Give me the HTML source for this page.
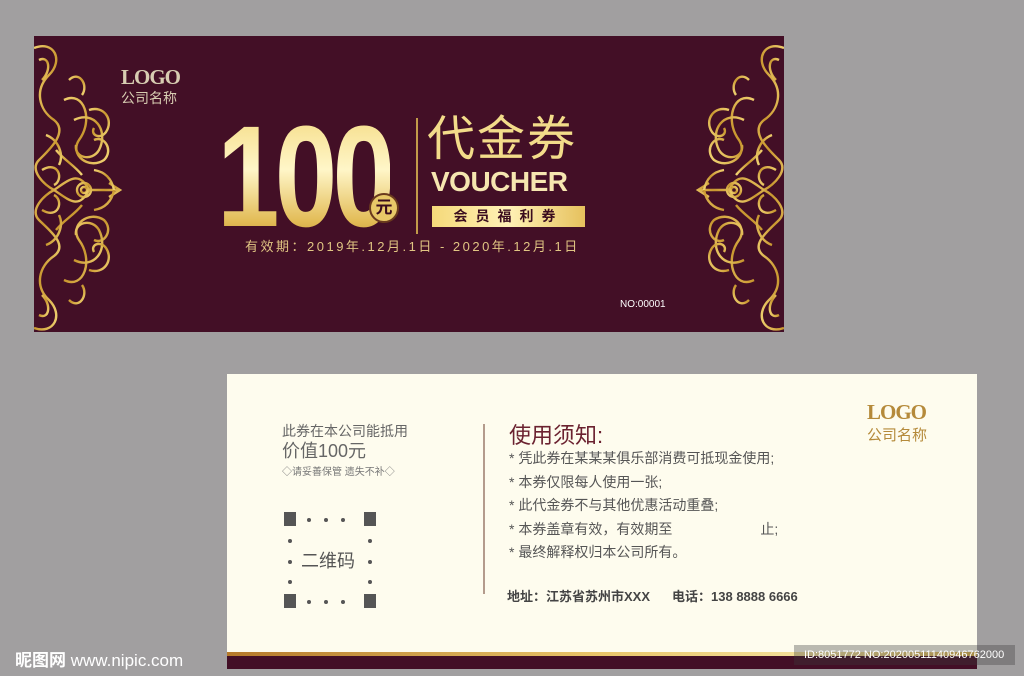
<!DOCTYPE html>
<html><head><meta charset="utf-8"><style>
*{margin:0;padding:0;box-sizing:border-box}
body{width:1024px;height:676px;background:#a19fa0;position:relative;overflow:hidden;font-family:"Liberation Sans","Noto Sans CJK SC",sans-serif}
.a{position:absolute}
.top{left:34px;top:36px;width:750px;height:296px;background:#430f26}
.gold{background:linear-gradient(180deg,#f3d77a 0%,#fff6c8 45%,#e2bb55 80%,#b98a2e 100%);-webkit-background-clip:text;background-clip:text;color:transparent}
.bot{left:227px;top:374px;width:750px;height:295px;background:#fefcee}
.sq{background:#555;width:12px;height:14px}
.dt{background:#555;width:4px;height:4px;border-radius:50%}
</style></head><body>
<div class="a top">
<svg class="a" style="left:0;top:0" width="750" height="296" viewBox="0 0 750 296">
<defs><linearGradient id="g" x1="0" y1="0" x2="1" y2="1"><stop offset="0" stop-color="#f0cf6e"/><stop offset=".5" stop-color="#c9972f"/><stop offset="1" stop-color="#f3d676"/></linearGradient>
<g id="orn" fill="none" stroke="url(#g)" stroke-width="2.4">
<path d="M0 8 C20 0 30 20 15 35 C0 50 5 70 20 80 C35 92 15 110 5 120 C-5 130 10 145 20 150 C10 155 -5 170 5 180 C15 190 35 205 20 216 C5 226 0 246 15 260 C30 275 20 295 0 288"/>
<path d="M5 20 C15 15 18 30 8 40"/><path d="M5 275 C15 280 18 265 8 255"/>
<path d="M20 150 C35 140 45 130 55 150 C45 170 35 160 20 150"/>
<path d="M30 60 C50 50 60 80 45 100 C35 115 55 130 70 120 C80 110 70 95 60 100"/>
<path d="M30 240 C50 250 60 220 45 200 C35 185 55 170 70 180 C80 190 70 205 60 200"/>
<path d="M55 150 L85 150 M75 143 L86 150 L75 157"/>
<path d="M40 80 C60 70 75 90 65 110 C58 122 40 118 42 105"/>
<path d="M40 220 C60 230 75 210 65 190 C58 178 40 182 42 195"/>
<circle cx="50" cy="150" r="7"/><circle cx="50" cy="150" r="3"/>
<path d="M22 110 C30 120 40 125 48 135"/><path d="M22 190 C30 180 40 175 48 165"/>
<path d="M35 40 C45 30 55 45 48 55"/><path d="M35 260 C45 270 55 255 48 245"/>
<path d="M8 130 C25 120 30 140 20 145"/><path d="M8 170 C25 180 30 160 20 155"/>
<path d="M55 70 C70 65 80 80 72 92 C66 100 56 95 60 88"/><path d="M55 230 C70 235 80 220 72 208 C66 200 56 205 60 212"/>
<path d="M12 95 C25 100 30 115 25 125"/><path d="M12 205 C25 200 30 185 25 175"/>
<path d="M60 130 C72 132 78 140 80 150"/><path d="M60 170 C72 168 78 160 80 150"/>
</g></defs>
<use href="#orn" transform="translate(0,4)"/>
<use href="#orn" transform="translate(750,4) scale(-1,1)"/>
</svg>
<div class="a" style="left:87px;top:29px;font-family:'Liberation Serif',serif;font-weight:bold;font-size:21px;color:#d8cdb2;letter-spacing:-1px">LOGO</div>
<div class="a" style="left:87px;top:52px;font-size:14px;color:#d8cdb2">公司名称</div>
<div class="a gold" style="left:183px;top:66px;font-size:144px;font-weight:bold;letter-spacing:-6px;line-height:150px;transform:scaleX(.78);transform-origin:left">100</div>
<div class="a" style="left:335px;top:157px;width:30px;height:30px;border-radius:50%;background:#e8c868;border:2px solid #6a3a1e;font-size:17px;color:#3a0c1e;text-align:center;line-height:26px;font-weight:bold">元</div>
<div class="a" style="left:382px;top:82px;width:2px;height:116px;background:#c29b4a"></div>
<div class="a" style="left:393px;top:76px;font-size:48px;color:#f3dc8a;letter-spacing:2px;line-height:56px">代金券</div>
<div class="a" style="left:397px;top:130px;font-size:28px;font-weight:bold;color:#f6e6b0;letter-spacing:-.5px">VOUCHER</div>
<div class="a" style="left:398px;top:170px;width:153px;height:21px;background:linear-gradient(90deg,#f5d97a,#fff1b6,#e6c15d);color:#3a0c1e;font-weight:bold;font-size:14px;letter-spacing:8px;text-align:center;line-height:21px">会员福利券</div>
<div class="a" style="left:211px;top:200px;font-size:13px;color:#e0c583;letter-spacing:2.5px">有效期：2019年.12月.1日 - 2020年.12月.1日</div>
<div class="a" style="left:586px;top:263px;font-size:10px;color:#fff">NO:00001</div>
</div>
<div class="a bot">
<div class="a" style="left:55px;top:47px;font-size:14px;color:#666">此券在本公司能抵用</div>
<div class="a" style="left:55px;top:63px;font-size:18px;color:#666">价值100元</div>
<div class="a" style="left:55px;top:89px;font-size:10px;color:#777">◇请妥善保管 遗失不补◇</div>
<div class="a sq" style="left:57px;top:138px"></div><div class="a sq" style="left:137px;top:138px"></div>
<div class="a sq" style="left:57px;top:220px"></div><div class="a sq" style="left:137px;top:220px"></div>
<div class="a dt" style="left:80px;top:144px"></div><div class="a dt" style="left:97px;top:144px"></div><div class="a dt" style="left:114px;top:144px"></div>
<div class="a dt" style="left:80px;top:226px"></div><div class="a dt" style="left:97px;top:226px"></div><div class="a dt" style="left:114px;top:226px"></div>
<div class="a dt" style="left:61px;top:165px"></div><div class="a dt" style="left:61px;top:186px"></div><div class="a dt" style="left:61px;top:206px"></div>
<div class="a dt" style="left:141px;top:165px"></div><div class="a dt" style="left:141px;top:186px"></div><div class="a dt" style="left:141px;top:206px"></div>
<div class="a" style="left:74px;top:173px;font-size:18px;color:#555">二维码</div>
<div class="a" style="left:256px;top:50px;width:2px;height:170px;background:#b49b8c"></div>
<div class="a" style="left:282px;top:44px;font-size:22px;color:#6b2230">使用须知:</div>
<div class="a" style="left:282px;top:73px;font-size:14px;color:#555;line-height:23.5px">
<div>* 凭此券在某某某俱乐部消费可抵现金使用;</div>
<div>* 本券仅限每人使用一张;</div>
<div>* 此代金券不与其他优惠活动重叠;</div>
<div>* 本券盖章有效，有效期至<span style="display:inline-block;width:88px"></span>止;</div>
<div>* 最终解释权归本公司所有。</div></div>
<div class="a" style="left:280px;top:212px;font-size:13px;color:#444;font-weight:bold">地址：江苏省苏州市XXX<span style="display:inline-block;width:22px"></span>电话：138 8888 6666</div>
<div class="a" style="left:640px;top:26px;font-family:'Liberation Serif',serif;font-weight:bold;font-size:21px;color:#b58a3a;letter-spacing:-1px">LOGO</div>
<div class="a" style="left:640px;top:50px;font-size:15px;color:#b58a3a">公司名称</div>
<div class="a" style="left:0;top:278px;width:750px;height:4px;background:linear-gradient(90deg,#b57a2a,#e9c66a 50%,#f5e4a0 80%,#e0b850)"></div>
<div class="a" style="left:0;top:282px;width:750px;height:13px;background:#430f26"></div>
</div>
<div class="a" style="left:15px;top:646px;font-size:17px;color:#fff;font-weight:bold">昵图网 <span style="font-weight:normal">www.nipic.com</span></div>
<div class="a" style="left:794px;top:645px;width:221px;height:20px;background:rgba(60,60,60,.35);color:#fff;font-size:11px;line-height:20px;padding-left:10px">ID:8051772 NO:20200511140946762000</div>
</body></html>
